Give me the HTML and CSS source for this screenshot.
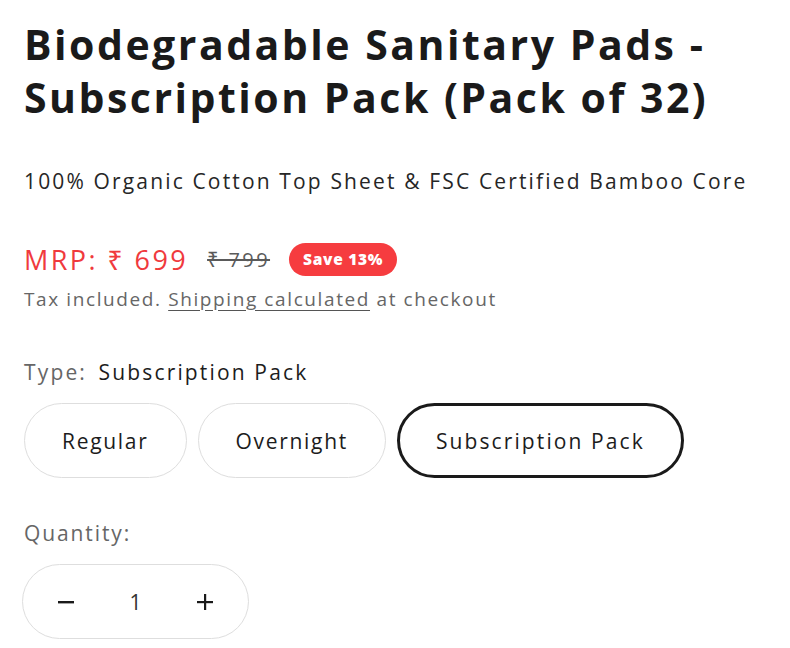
FILE: index.html
```html
<!DOCTYPE html>
<html>
<head>
<meta charset="utf-8">
<link rel="stylesheet" href="styles.css">
</head>
<body>
<main class="product">
  <h1 class="title">Biodegradable Sanitary Pads - Subscription Pack (Pack of 32)</h1>
  <p class="subtitle">100% Organic Cotton Top Sheet &amp; FSC Certified Bamboo Core</p>
  <div class="price-row">
    <span class="price">MRP: ₹ 699</span>
    <s class="compare">₹ 799</s>
    <span class="badge">Save 13%</span>
  </div>
  <p class="tax">Tax included. <a class="link" href="#">Shipping calculated</a> at checkout</p>
  <div class="variant">
    <div class="variant-label"><span class="muted">Type:</span> Subscription Pack</div>
    <div class="pills">
      <span class="pill">Regular</span>
      <span class="pill">Overnight</span>
      <span class="pill active">Subscription Pack</span>
    </div>
  </div>
  <div class="qty-block">
    <div class="qty-label">Quantity:</div>
    <div class="qty">
      <span class="qty-btn"><svg width="16" height="16" viewBox="0 0 16 16"><rect x="0" y="7" width="16" height="2.4" fill="#1a1a1a"/></svg></span>
      <span class="qty-val">1</span>
      <span class="qty-btn"><svg width="16" height="16" viewBox="0 0 16 16"><rect x="0" y="7" width="16" height="2.2" fill="#1a1a1a"/><rect x="7" y="0" width="2.2" height="16" fill="#1a1a1a"/></svg></span>
    </div>
  </div>
</main>
</body>
</html>
```
FILE: styles.css
```css
* { box-sizing: border-box; }
body {
  margin: 0;
  font-family: "Open Sans", "Noto Sans", sans-serif;
  color: #1c1c1c;
  background: #fff;
}
.product {
  padding: 18px 24px 0 24px;
}
.title {
  margin: 0;
  font-size: 41px;
  line-height: 53px;
  font-weight: 700;
  letter-spacing: 2.5px;
  color: #1a1a1a;
  max-width: 740px;
}
.subtitle {
  margin: 43px 0 0 0;
  font-size: 21px;
  line-height: 28px;
  color: #262626;
  letter-spacing: 2.15px;
}
.price-row {
  margin-top: 47px;
  display: flex;
  align-items: center;
  height: 34px;
}
.price {
  color: #f03a3d;
  font-size: 27px;
  letter-spacing: 2.4px;
}
.compare {
  color: #5a5a5a;
  font-size: 20px;
  letter-spacing: 2.4px;
  margin-left: 19px;
}
.badge {
  margin-left: 19px;
  background: #f63c3f;
  color: #fff;
  font-weight: 800;
  font-size: 15.5px;
  letter-spacing: 0.7px;
  border-radius: 17px;
  padding: 6px 14px;
  line-height: 21px;
}
.tax {
  margin: 10px 0 0 0;
  font-size: 19px;
  line-height: 26px;
  color: #666;
  letter-spacing: 1.6px;
}
.link {
  color: #666;
  text-decoration: underline;
  text-underline-offset: 4px;
  text-decoration-color: #555;
}
.variant {
  margin-top: 46px;
}
.variant-label {
  font-size: 21px;
  line-height: 28px;
  color: #1c1c1c;
  letter-spacing: 2.15px;
}
.muted { color: #666; margin-right: 4px; }
.pills {
  margin-top: 17px;
  display: flex;
  gap: 11px;
}
.pill {
  display: inline-flex;
  align-items: center;
  justify-content: center;
  height: 75px;
  padding: 0 37px;
  border: 1px solid #dedede;
  border-radius: 38px;
  font-size: 21px;
  letter-spacing: 1.7px;
  color: #1c1c1c;
}
.pill.active {
  border: 3px solid #1a1a1a;
  padding: 0 36px;
  letter-spacing: 2.1px;
}
.qty-block {
  margin-top: 41px;
}
.qty-label {
  font-size: 21px;
  line-height: 28px;
  color: #666;
  letter-spacing: 1.9px;
}
.qty {
  margin-top: 17px;
  margin-left: -2px;
  width: 227px;
  height: 75px;
  border: 1px solid #dedede;
  border-radius: 38px;
  display: flex;
  align-items: center;
  justify-content: space-between;
  padding: 0 35px;
}
.qty-btn { display: flex; align-items: center; }
.qty-val { font-size: 21px; color: #333; }
```
